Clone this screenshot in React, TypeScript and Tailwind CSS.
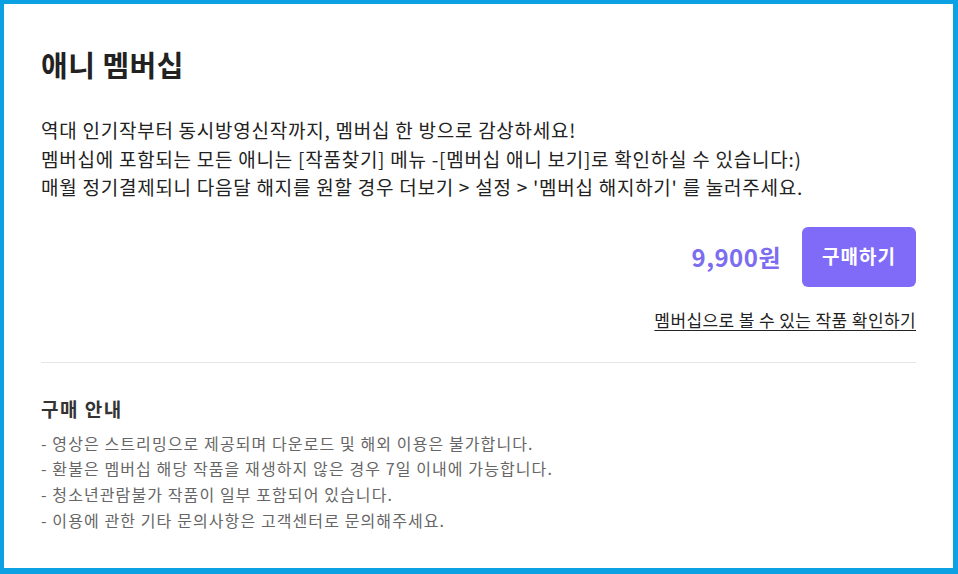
export default function App() {
  const notices = [
    "- 영상은 스트리밍으로 제공되며 다운로드 및 해외 이용은 불가합니다.",
    "- 환불은 멤버십 해당 작품을 재생하지 않은 경우 7일 이내에 가능합니다.",
    "- 청소년관람불가 작품이 일부 포함되어 있습니다.",
    "- 이용에 관한 기타 문의사항은 고객센터로 문의해주세요.",
  ];

  return (
    <div
      className="h-[574px] w-[958px] border-t-4 border-l-4 border-r-[5px] border-b-[6px] border-[#0ba1e2] bg-white"
      style={{ fontFamily: '"Noto Sans CJK KR", "Noto Sans", sans-serif' }}
    >
      <div className="px-[37px] pt-[40px]">
        <h1 className="text-[29px] font-bold leading-[40px] tracking-[0.5px] text-[#222]">애니 멤버십</h1>

        <div className="mt-[32px] text-[19px] leading-[28.5px] tracking-[0.75px] text-[#222]">
          <p>역대 인기작부터 동시방영신작까지, 멤버십 한 방으로 감상하세요!</p>
          <p>멤버십에 포함되는 모든 애니는 [작품찾기] 메뉴 -[멤버십 애니 보기]로 확인하실 수 있습니다:)</p>
          <p>매월 정기결제되니 다음달 해지를 원할 경우 더보기 &gt; 설정 &gt; '멤버십 해지하기' 를 눌러주세요.</p>
        </div>

        <div className="mt-[25px] flex items-center justify-end gap-[21px]">
          <span className="text-[24px] font-bold tracking-[0.5px] text-[#7c6cef]">9,900원</span>
          <button className="h-[60px] w-[114px] rounded-[6px] bg-[#7f6bf7] text-[19px] font-bold tracking-[1px] text-white">
            구매하기
          </button>
        </div>

        <div className="mt-[22px] flex justify-end">
          <a href="#" className="text-[17px] leading-[22px] tracking-[0.4px] text-[#222] underline underline-offset-[3px]">
            멤버십으로 볼 수 있는 작품 확인하기
          </a>
        </div>

        <div className="mt-[31px] h-px bg-[#e5e5e5]" />

        <h2 className="mt-[33px] text-[19px] font-bold leading-[26px] tracking-[1.5px] text-[#333]">구매 안내</h2>
        <ul className="mt-[9px] text-[16px] leading-[25.7px] tracking-[1.1px] text-[#666]">
          {notices.map((n) => (
            <li key={n}>{n}</li>
          ))}
        </ul>
      </div>
    </div>
  );
}
